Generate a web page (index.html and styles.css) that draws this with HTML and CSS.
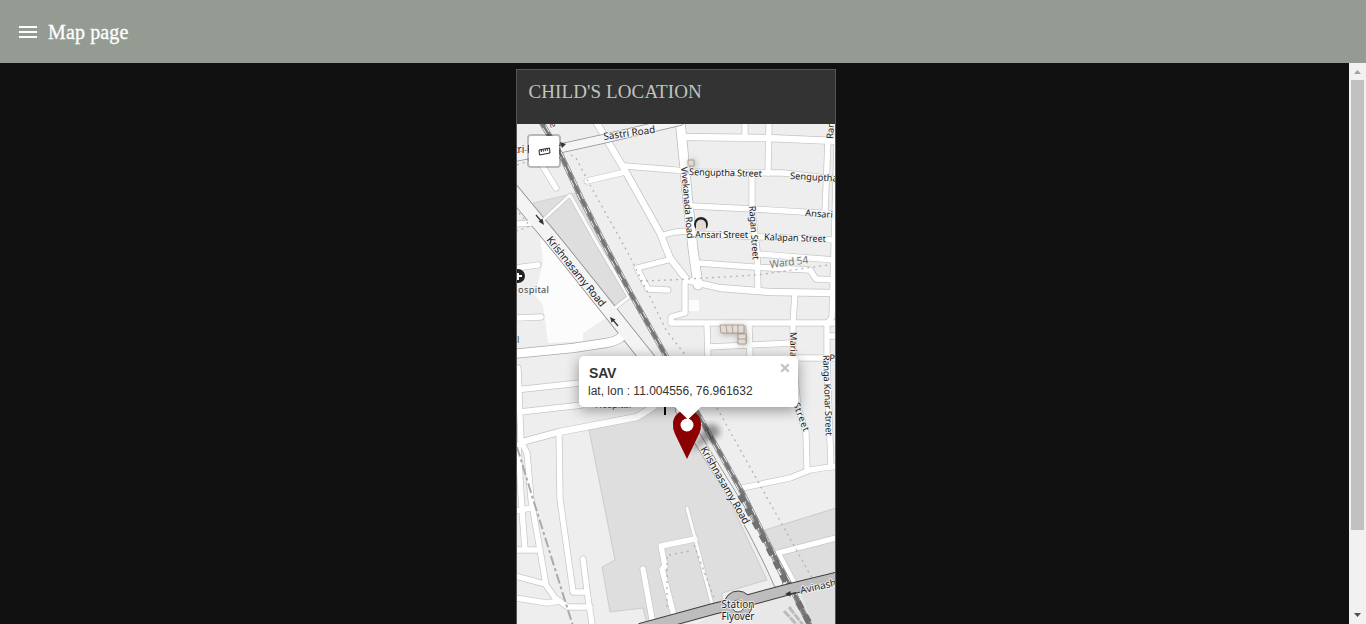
FILE: index.html
```html
<!DOCTYPE html>
<html lang="en">
<head>
<meta charset="utf-8">
<title>Map page</title>
<link rel="stylesheet" href="styles.css">
</head>
<body>
<header class="toolbar">
  <svg class="menu-icon" width="18" height="12" viewBox="0 0 18 12"><path d="M0 0h18v2H0zM0 5h18v2H0zM0 10h18v2H0z" fill="#fff"/></svg>
  <h1 class="toolbar-title">Map page</h1>
</header>
<main class="content">
  <div class="viewport">
    <section class="card">
      <h2 class="card-title">CHILD'S LOCATION</h2>
      <div class="map">
        <svg class="tiles" width="318" height="500" viewBox="517 124 318 500">
          <defs>
            <g id="streets">
              <path d="M542 165L556 188M587 181L625 172M625 166L675 170L690 172L783 173L836 179M663 235L675 232L690 231"/>
              <path d="M745 120V137M769 120L768 173M828 140L825 212M752 175V210L757 250L758 289"/>
              <path d="M692 206L753 209L836 214M690 234L836 240M758 254L836 260M698 263L753 267L810 270L816 279L836 280"/>
              <path d="M837 140L834 250L832 317L827 324L827 358L831 467M795 293L793 323V360L798 407L806 433L807 470"/>
              <path d="M685 282V313L671 317V323H836M707 325L708 358M749 325L750 358M708 347L793 343M798 358H836M828 336H836"/>
              <path d="M742 488L790 478L810 470L836 466M637 268L668 260M637 268L648 289L668 290"/>
              <path d="M515 268L538 265M515 318L541 317M515 224L533 223M515 390L580 383M520 412L582 405"/>
              <path d="M518 368L521 441L527 453L531 499L540 550L546 585L555 598L568 607H590M518 445L522 510L525 550M515 511L531 508M515 550H540M515 576L545 584M515 598L547 603L560 601"/>
              <path d="M559 433L560 499L573 592H587M583 559L588 598L593 630M643 569L654 630"/>
              <path d="M661 546L695 539M661 546L665 566L662 569L674 616M778 553L836 538M778 553L795 585"/>
            </g>
            <g id="wide"><path d="M595 120L623 167L660 233L670 258L687 280L698 283L720 288L770 292L836 293M685 137L767 138L836 141M522 442L559 432L637 417L653 407L662 390"/></g>
            <g id="minor"><path d="M544 219L570 195L598 245L629 297L615 308M687 508L695 538L713 608"/></g>
            <path id="viveka" d="M680 120L685 170L688 203L693 249L698 285"/>
            <path id="sastri" d="M515 157L562 148L603 139L680 121"/>
            <path id="curve" d="M512 354L573 348L606 343Q618 341 622 336"/>
            <path id="krish" d="M510 188L561 250L644 354L690 412"/>
            <path id="krish2" d="M680 410L732 495Q758 537 778 583"/>
            <path id="avin" d="M640 629L713 609L738 603L790 589L840 577"/>
            <path id="rail" d="M540 120L561 155L582 200L607 249L631 294L666 356L703 423L742 492L767 542L790 585L812 630"/>
          </defs>
          <rect x="517" y="124" width="318" height="500" fill="#eee"/>
          <path d="M540 238L543 262L535 295L543 305L548 343L583 341V333L606 318L550 240z" fill="#fcfcfc"/>
          <path d="M533 203L575 193L632 292L615 305L570 250z" fill="#dedede" stroke="#c4c4c4" stroke-width=".6"/>
          <path d="M589 430L640 419L665 395L690 430L727 495L767 580L722 593V603L648 628L643 608L610 612L602 567L615 560L602 495z" fill="#dedede" stroke="#bbb" stroke-width=".6"/>
          <path d="M765 530L836 508V626H808z" fill="#dedede" stroke="#bbb" stroke-width=".6"/>
          <path d="M693 626L720 611L800 590L813 626z" fill="#e8e8e8"/>
          <path d="M689 300H699V311H689z" fill="#fcfcfc"/>
          <g class="road">
            <use href="#streets" stroke="#c6c6c6" stroke-width="6.8"/><use href="#wide" stroke="#c3c3c3" stroke-width="7.8"/><use href="#viveka" stroke="#bdbdbd" stroke-width="10.5"/>
            <use href="#minor" stroke="#c6c6c6" stroke-width="4.4"/>
            <use href="#curve" stroke="#aaa" stroke-width="10"/><use href="#krish" stroke="#888" stroke-width="15"/>
            <use href="#streets" stroke="#fff" stroke-width="5.4"/><use href="#wide" stroke="#fff" stroke-width="6.4"/><use href="#viveka" stroke="#fff" stroke-width="9"/>
            <use href="#minor" stroke="#fbfbfb" stroke-width="3"/><use href="#curve" stroke="#fff" stroke-width="8.5"/>
            <use href="#sastri" stroke="#8f8f8f" stroke-width="9.5"/><use href="#sastri" stroke="#f5f5f5" stroke-width="8"/>
            <use href="#krish" stroke="#f4f4f4" stroke-width="13.5"/>
            <use href="#krish2" stroke="#888" stroke-width="10"/><use href="#krish2" stroke="#f2f2f2" stroke-width="8.5"/>
          </g>
          <g fill="none" stroke="#b3b3b3" stroke-width="1.3" stroke-dasharray="2 4">
            <path d="M571 155L576 158L590 185L628 253L650 297L666 330L686 356M717 408L770 503L797 551L813 580M640 281L670 280L757 275L828 265M517 165L532 160M519 213L530 226L517 231M669 555L690 551M694 545L715 600M667 557V610"/>
          </g>
          <use href="#rail" fill="none" stroke="#777" stroke-width="5.4"/>
          <use href="#rail" fill="none" stroke="#f1f1f1" stroke-width="4.200"/>
          <use href="#rail" fill="none" stroke="#777" stroke-width="2.4"/>
          <use href="#rail" fill="none" stroke="#777" stroke-width="4" stroke-dasharray="8 7"/>
          <path d="M740 495L767 545L788 586M798 602L811 626" fill="none" stroke="#707070" stroke-width="6" stroke-dasharray="8 7"/>
          <path d="M517 447L533 499L573 626" fill="none" stroke="#aaa" stroke-width="2" stroke-dasharray="10 3 3 3"/>
          <use href="#avin" fill="none" stroke="#3d3d3d" stroke-width="12"/>
          <circle cx="738" cy="605" r="14" fill="#bdbdbd" stroke="#3d3d3d"/>
          <use href="#avin" fill="none" stroke="#bdbdbd" stroke-width="10"/>
          <circle cx="738" cy="606" r="6" fill="#eee" stroke="#3d3d3d" stroke-width=".8"/>
          <path d="M784 611L798 626M789 607L803 625" stroke="#bbb" stroke-width="3" stroke-dasharray="8 1"/>
          <g fill="#e3dad4" stroke="#a09083" stroke-width=".8" class="buildings">
            <path d="M720 325H744V333H721zM726 325L727 333M732 325L733 333M738 325V333M738 334H746V344H738zM738 339H746M688 160H694V166H688z"/>
          </g>
          <g stroke="#333" stroke-width="1.2" fill="#333">
            <path d="M536 215L541 221M618 326L613 320M557 146L561 145M796 592.500L789 594"/>
            <path stroke="none" d="M544 225L538.500 221.500L542.500 218.500zM610 317L615.500 319.500L611.500 322.500zM566 144L560 142L562 148zM785 594L790.500 591V596.500z"/>
          </g>
          <circle cx="518" cy="276" r="7" fill="#222"/><path d="M517 273h2v2h3v2h-3v3h-2z" fill="#fff"/>
          <circle cx="701" cy="224" r="7" fill="#222"/><path d="M696 225Q696 220 701 219.500Q706 220 706 225V232H696z" fill="#e3dad6"/>
          <path d="M664 405h2v10h-2z"/>
          <g class="labels">
            <text transform="translate(604 140) rotate(-8)" textLength="52" class="mid">Sastri Road</text>
            <text x="514" y="153" class="mid">tri R</text>
            <text transform="translate(549 124) rotate(61)" class="soft">e</text>
            <text transform="translate(689 175) rotate(1.500)" textLength="73">Senguptha Street</text>
            <text transform="translate(790 179) rotate(3)">Senguptha</text>
            <text transform="translate(805 216) rotate(4)">Ansari S</text>
            <text transform="translate(695 238)" textLength="53">Ansari Street</text>
            <text transform="translate(764 240) rotate(2)" textLength="62">Kalapan Street</text>
            <text transform="translate(770 268) rotate(-7)" textLength="39" class="ward">Ward 54</text>
            <text transform="translate(681 167) rotate(85)" textLength="72">Vivekanada Road</text>
            <text transform="translate(749 206) rotate(86)" textLength="54">Ragan Street</text>
            <text transform="translate(790 332) rotate(89)">Maria</text>
            <text transform="translate(793 404) rotate(69)" textLength="30">Street</text>
            <text transform="translate(823 355) rotate(88)" textLength="81">Ranga Konar Street</text>
            <text transform="translate(829 361) rotate(5)">Pra</text>
            <text transform="translate(833 139) rotate(-86)">Ran</text>
            <text transform="translate(546 240) rotate(51)" textLength="87" class="major">Krishnasamy Road</text>
            <text transform="translate(700 449) rotate(60)" textLength="88" class="major">Krishnasamy Road</text>
            <text transform="translate(801 594) rotate(-13)" class="mid">Avinash</text>
            <text x="738" y="608" text-anchor="middle" textLength="33" class="mid">Station</text>
            <text x="738" y="620" text-anchor="middle" textLength="33" class="mid">Flyover</text>
            <text x="518" y="293" textLength="31" class="soft">ospital</text>
            <text x="517" y="343" class="soft">l</text>
            <text x="595" y="408" class="soft">Hospital</text>
          </g>
        </svg>
        <button class="measure" aria-label="Measure"><svg width="13" height="9" viewBox="0 0 13 9"><path d="M1 3L11.500 1L12 6L1.500 8zM3.300 3v2M5.300 2.600v2M7.300 2.200v2M9.300 1.800v2" fill="none" stroke="#222"/></svg></button>
        <svg class="marker" width="54" height="52" viewBox="670 409 54 52">
          <defs><filter id="blur"><feGaussianBlur stdDeviation="3"/></filter></defs>
          <path d="M690 452L705 427Q713 419 720 430Q722 436 708 441z" fill="#000" opacity=".4" filter="url(#blur)"/>
          <path d="M687 459L675 434Q672.500 429 673 423.500A14 13.500 0 0 1 701 423.500Q701.500 429 699 434z" fill="#8b0000"/>
          <circle cx="687" cy="425" r="6.500" fill="#fff"/>
        </svg>
        <div class="popup">
          <strong class="popup-name">SAV</strong>
          <span class="popup-coords">lat, lon : 11.004556, 76.961632</span>
          <svg class="popup-close" width="10" height="10" viewBox="0 0 10 10"><path d="M1.200 1.200L8.800 8.800M8.800 1.200L1.200 8.800" stroke="#c3c3c3" stroke-width="2.200"/></svg>
          <svg class="popup-tip" width="28" height="13" viewBox="0 0 28 13"><path d="M0 0H28L15 12.500Q14 13.500 13 12.500z" fill="#fff"/></svg>
        </div>
      </div>
    </section>
  </div>
  <div class="scrollbar">
    <svg width="17" height="17"><path d="M5 11L8.500 7L12 11z" fill="#a3a3a3"/></svg>
    <div class="thumb"></div>
    <svg width="17" height="17"><path d="M5 6L8.500 10L12 6z" fill="#505050"/></svg>
  </div>
</main>
</body>
</html>
```
FILE: styles.css
```css
* { box-sizing: border-box; }
body { margin: 0; height: 624px; display: flex; flex-direction: column; overflow: hidden; background: #111; }
.toolbar { flex: none; height: 63px; padding-left: 19px; display: flex; align-items: center; gap: 11px; background: #949b93; }
.toolbar-title { margin: 0; padding-top: 1px; color: #fff; font: 500 20px "Liberation Serif", serif; letter-spacing: .12px; -webkit-text-stroke: .3px #fff; }
.content { flex: 1; min-height: 0; display: flex; }
.viewport { flex: 1; padding: 6px 0 0 3px; display: flex; justify-content: center; overflow: hidden; }
.card { width: 320px; height: 700px; border: 1px solid #555; background: #333; }
.card-title { margin: 0; height: 54px; padding: 11px 11.500px; color: #bfc5bd; font: 400 19px/22px "Liberation Serif", serif; letter-spacing: .1px; }
.map { position: relative; height: 500px; overflow: hidden; }
.tiles { display: block; }
.road { fill: none; stroke-linecap: round; stroke-linejoin: round; }
.buildings { filter: drop-shadow(1px 1px 3px rgba(0, 0, 0, .3)); }
.labels { font: 9.300px "Noto Sans", sans-serif; fill: #222; stroke: #f4f4f4; stroke-width: 1.6px; paint-order: stroke; }
.labels .ward { font-size: 10.500px; fill: #777; }
.labels .mid { font-size: 10px; }
.labels .major { font-size: 10.500px; }
.labels .soft { fill: #444; }
.measure { position: absolute; left: 10px; top: 10px; width: 34px; height: 34px; padding: 0; display: grid; place-items: center; border: 2px solid rgba(0, 0, 0, .22); border-radius: 4px; background: #fff; background-clip: padding-box; }
.marker { position: absolute; left: 153px; top: 285px; }
.popup { position: absolute; left: 62px; top: 232px; width: 219px; height: 51px; padding: 9px 9px 0; display: flex; flex-direction: column; border-radius: 5px; background: #fff; box-shadow: 0 3px 14px rgba(0, 0, 0, .4); color: #333; font-family: "Liberation Sans", Arial, sans-serif; }
.popup-name { padding-left: 1px; font-size: 14px; line-height: 17px; letter-spacing: -.2px; }
.popup-coords { font-size: 12px; line-height: 18px; white-space: nowrap; }
.popup-close { position: absolute; right: 8px; top: 7px; }
.popup-tip { position: absolute; left: 95px; top: 50px; }
.scrollbar { width: 17px; flex: none; display: flex; flex-direction: column; background: #f1f1f1; }
.scrollbar svg { display: block; flex: none; }
.thumb { height: 450px; margin: 0 2px 77px; background: #c1c1c1; }
```
